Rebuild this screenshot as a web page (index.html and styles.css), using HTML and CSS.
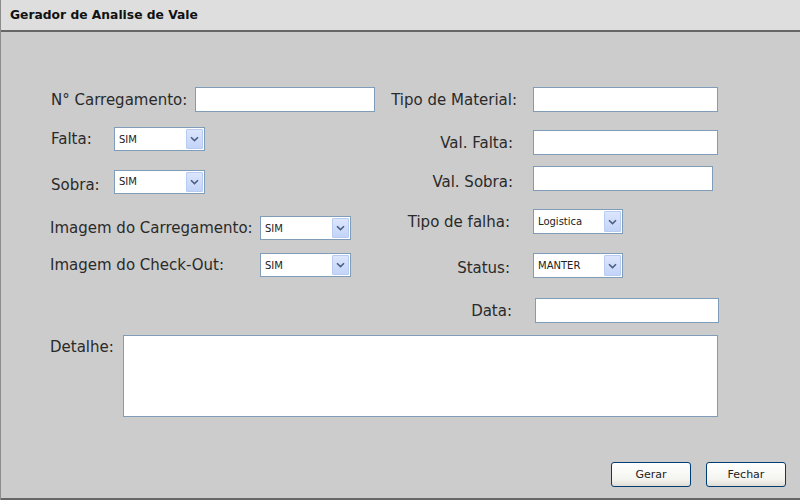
FILE: index.html
```html
<!DOCTYPE html>
<html lang="pt">
<head>
<meta charset="utf-8">
<title>Gerador de Analise de Vale</title>
<link rel="stylesheet" href="styles.css">
</head>
<body>
<div class="window">
  <header class="titlebar">Gerador de Analise de Vale</header>
  <main class="content">
    <div class="columns">
      <div class="lcol">
        <div class="row">
          <label class="llabel w-carr">N° Carregamento:</label>
          <input class="field w180" type="text">
        </div>
        <div class="row">
          <label class="llabel w-short">Falta:</label>
          <div class="select w91"><span>SIM</span><span class="drop"><svg width="9" height="6" viewBox="0 0 9 6"><path d="M1 1.2 L4.5 4.6 L8 1.2" fill="none" stroke="#4b5f84" stroke-width="1.6"/></svg></span></div>
        </div>
        <div class="row">
          <label class="llabel w-short low">Sobra:</label>
          <div class="select w91"><span>SIM</span><span class="drop"><svg width="9" height="6" viewBox="0 0 9 6"><path d="M1 1.2 L4.5 4.6 L8 1.2" fill="none" stroke="#4b5f84" stroke-width="1.6"/></svg></span></div>
        </div>
        <div class="row">
          <label class="llabel w-img">Imagem do Carregamento:</label>
          <div class="select w91"><span>SIM</span><span class="drop"><svg width="9" height="6" viewBox="0 0 9 6"><path d="M1 1.2 L4.5 4.6 L8 1.2" fill="none" stroke="#4b5f84" stroke-width="1.6"/></svg></span></div>
        </div>
        <div class="row">
          <label class="llabel w-img">Imagem do Check-Out:</label>
          <div class="select w91"><span>SIM</span><span class="drop"><svg width="9" height="6" viewBox="0 0 9 6"><path d="M1 1.2 L4.5 4.6 L8 1.2" fill="none" stroke="#4b5f84" stroke-width="1.6"/></svg></span></div>
        </div>
      </div>
      <div class="rcol">
        <div class="row">
          <label class="rlabel pr16">Tipo de Material:</label>
          <input class="field w185" type="text">
        </div>
        <div class="row">
          <label class="rlabel">Val. Falta:</label>
          <input class="field w185" type="text">
        </div>
        <div class="row">
          <label class="rlabel low">Val. Sobra:</label>
          <input class="field w180" type="text">
        </div>
        <div class="row">
          <label class="rlabel pr23">Tipo de falha:</label>
          <div class="select w90 h25"><span>Logistica</span><span class="drop"><svg width="9" height="6" viewBox="0 0 9 6"><path d="M1 1.2 L4.5 4.6 L8 1.2" fill="none" stroke="#4b5f84" stroke-width="1.6"/></svg></span></div>
        </div>
        <div class="row">
          <label class="rlabel pr23 lower">Status:</label>
          <div class="select w90 h25"><span>MANTER</span><span class="drop"><svg width="9" height="6" viewBox="0 0 9 6"><path d="M1 1.2 L4.5 4.6 L8 1.2" fill="none" stroke="#4b5f84" stroke-width="1.6"/></svg></span></div>
        </div>
        <div class="row">
          <label class="rlabel pr21">Data:</label>
          <input class="field w184 ml2" type="text">
        </div>
      </div>
    </div>
    <div class="detail-row">
      <label class="dlabel">Detalhe:</label>
      <textarea class="detail"></textarea>
    </div>
    <div class="actions">
      <button class="btn" type="button">Gerar</button>
      <button class="btn" type="button">Fechar</button>
    </div>
  </main>
</div>
</body>
</html>
```
FILE: styles.css
```css
* { box-sizing: border-box; }
html, body { margin: 0; padding: 0; }
body {
  width: 800px;
  height: 500px;
  background: #cccccc;
  font-family: "DejaVu Sans", Verdana, sans-serif;
  color: #2a2a2a;
  overflow: hidden;
}
.window {
  height: 500px;
  display: flex;
  flex-direction: column;
  border-left: 1px solid #8c8c8c;
}
.titlebar {
  height: 32px;
  flex: none;
  background: #dedede;
  border-bottom: 2px solid #666666;
  padding-left: 9px;
  line-height: 31px;
  font-size: 12.3px;
  font-weight: bold;
  color: #111;
}
.content {
  flex: 1;
  display: flex;
  flex-direction: column;
  padding-top: 55px;
  border-bottom: 2px solid #666666;
}
.columns { display: flex; }
.lcol {
  width: 389px;
  padding-left: 49px;
  display: grid;
  grid-template-rows: 40px 42px 47px 37px auto;
}
.rcol {
  display: grid;
  grid-template-rows: 43px 36px 43px 44px 45px auto;
}
.row {
  display: flex;
  align-items: center;
  align-self: start;
}
label {
  font-size: 15px;
  line-height: 18px;
  white-space: nowrap;
}
.llabel { padding-left: 1px; }
.w-carr { width: 145px; }
.w-short { width: 64px; }
.w-img { width: 210px; padding-left: 0; }
.rlabel {
  width: 143px;
  text-align: right;
  padding-right: 20px;
}
.pr16 { padding-right: 16px; }
.pr21 { padding-right: 21px; }
.pr23 { padding-right: 23px; }
.low { margin-top: 7px; }
.lower { margin-top: 4px; }
.field {
  height: 25px;
  border: 1px solid #7f9db9;
  background: #fff;
  margin: 0;
  padding: 0 3px;
  font: 11px "DejaVu Sans", sans-serif;
}
.w180 { width: 180px; }
.w184 { width: 184px; }
.w185 { width: 185px; }
.ml2 { margin-left: 2px; }
.select {
  height: 24px;
  border: 1px solid #7f9db9;
  background: #fff;
  display: flex;
  align-items: stretch;
  justify-content: space-between;
  padding: 1px 1px 1px 4px;
  font-size: 10px;
  color: #222;
}
.select span:first-child { align-self: center; }
.w91 { width: 91px; }
.w90 { width: 90px; }
.h25 { height: 25px; }
.drop {
  width: 17px;
  border: 1px solid #b8cbf3;
  border-radius: 1px;
  background: linear-gradient(#dce6fc, #c3d4f8);
  display: flex;
  align-items: center;
  justify-content: center;
}
.detail-row {
  display: flex;
  align-items: flex-start;
  margin-top: 12px;
  padding-left: 49px;
}
.dlabel {
  width: 73px;
  margin-top: 3px;
}
.detail {
  width: 595px;
  height: 82px;
  border: 1px solid #7f9db9;
  background: #fff;
  margin: 0;
  resize: none;
}
.actions {
  margin-top: auto;
  display: flex;
  justify-content: flex-end;
  gap: 15px;
  padding-right: 14px;
  padding-bottom: 11px;
}
.btn {
  width: 80px;
  height: 25px;
  border: 1px solid #003c74;
  border-radius: 3px;
  background: linear-gradient(#ffffff, #f4f4f0 70%, #e0ddd5);
  font: 11px "DejaVu Sans", sans-serif;
  color: #222;
  padding: 0;
}
```
